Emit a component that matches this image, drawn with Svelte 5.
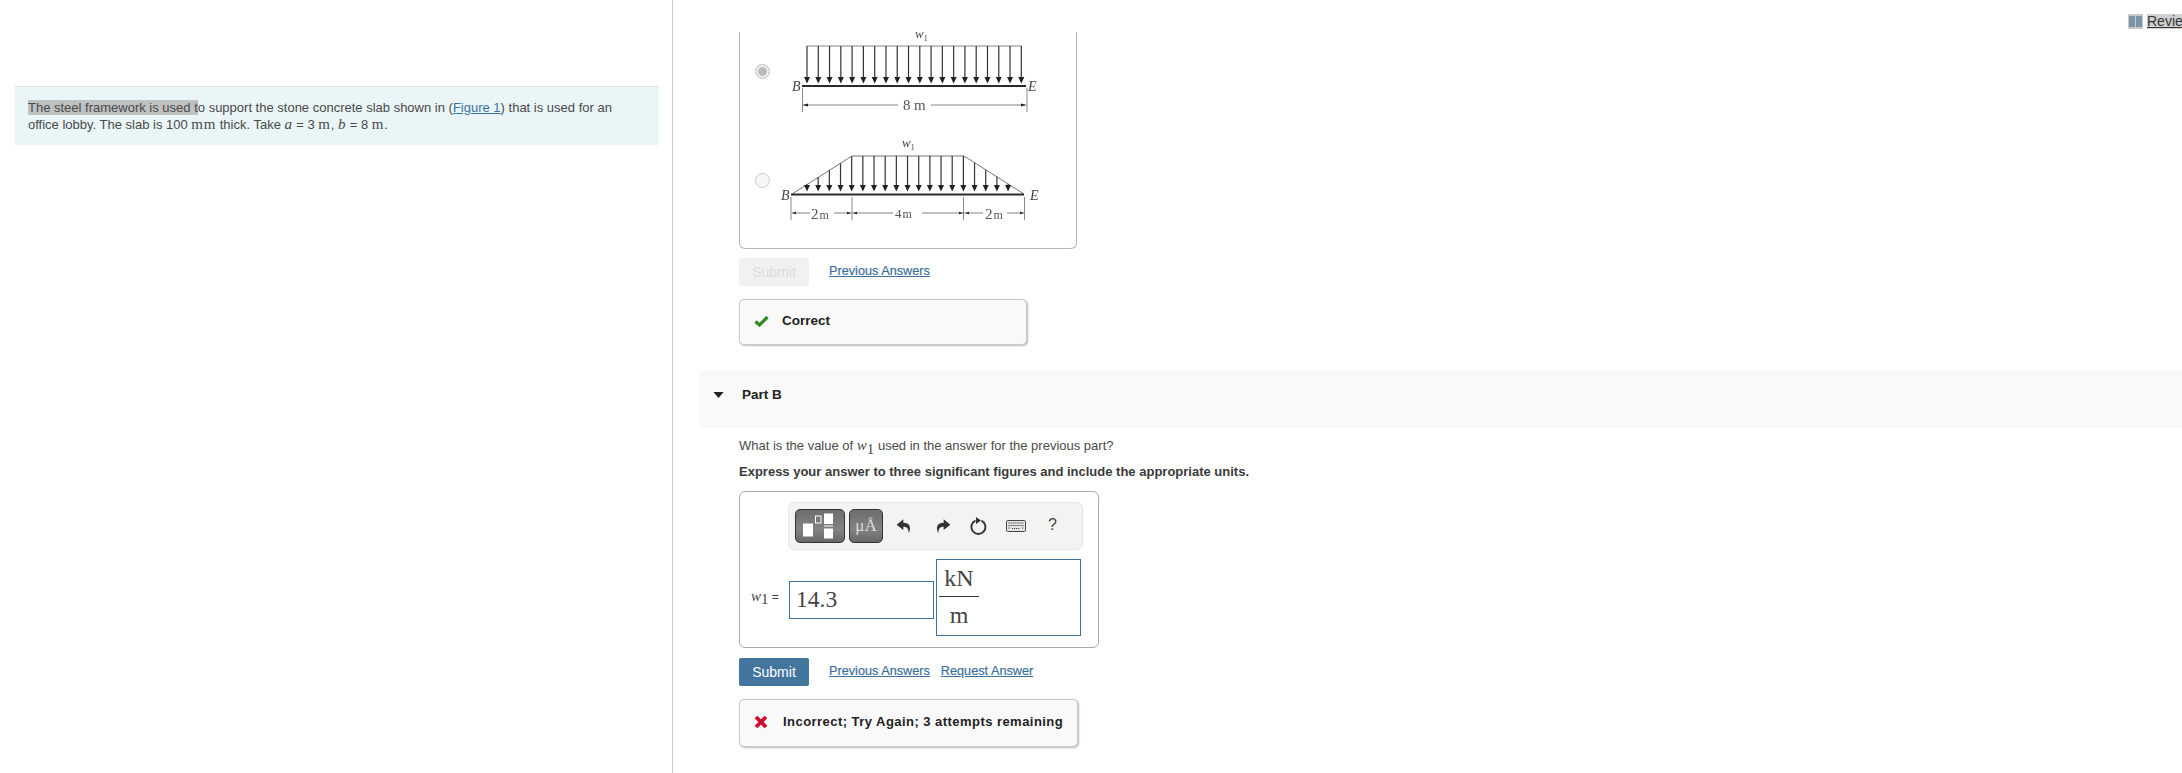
<script>
  const topArrows = Array.from({ length: 20 }, (_, i) => 807 + i * 11.28);
  const trapArrows = Array.from({ length: 19 }, (_, i) => 807 + i * 11.17);
  function trapTop(x) {
    if (x < 852) return 194 - ((x - 791.5) * 38) / 60.5;
    if (x > 964) return 194 - ((1024 - x) * 38) / 60;
    return 156;
  }
</script>

<div class="page">
  <aside class="left">
    <div class="intro">
      <p><span class="sel">The steel framework is used t</span>o support the stone concrete slab shown in (<a href="#f">Figure 1</a>) that is used for an office lobby. The slab is 100 <span class="m wide">mm</span> thick. Take <i class="m wide">a</i> = 3 <span class="m wide">m</span>, <i class="m wide">b</i> = 8 <span class="m wide">m</span>.</p>
    </div>
  </aside>

  <main class="right">
    <a class="review" href="#r">
      <svg width="15" height="15" viewBox="0 0 15 15"><rect width="15" height="15" fill="#c9c9c9" /><rect x="1" y="2" width="6" height="11" fill="#7b94a8" /><rect x="8" y="2" width="6" height="11" fill="#7b94a8" /></svg>
      <span>Review</span>
    </a>

    <section class="choices">
      <div class="choice first">
        <span class="radio on"></span>
        <svg class="fig" width="270" height="88" viewBox="780 32 270 88">
          <text x="915" y="38" class="lab it w1">w<tspan dy="2.5" font-size="8" font-style="normal">1</tspan></text>
          <line x1="807" y1="46" x2="1022" y2="46" class="thin" />
          {#each topArrows as x}
            <line x1={x} y1="46" x2={x} y2="78" class="shaft" />
            <path d="M{x - 3} 77 H{x + 3} L{x} 83.5 Z" class="head" />
          {/each}
          <line x1="802" y1="86" x2="1026" y2="86" class="beam" />
          <text x="792" y="91" class="lab it">B</text>
          <text x="1028" y="91" class="lab it">E</text>
          <line x1="802.5" y1="88" x2="802.5" y2="112" class="tick" />
          <line x1="1027" y1="88" x2="1027" y2="112" class="tick" />
          <line x1="803" y1="105" x2="898" y2="105" class="thin" />
          <line x1="931" y1="105" x2="1026" y2="105" class="thin" />
          <path d="M803 105 l5 -1.5 v3 Z M1026 105 l-5 -1.5 v3 Z" class="head" />
          <text x="903" y="110" class="lab dim">8</text>
          <text x="914" y="110" class="lab dim">m</text>
        </svg>
      </div>
      <div class="choice second">
        <span class="radio"></span>
        <svg class="fig" width="270" height="100" viewBox="780 130 270 100">
          <text x="902" y="147" class="lab it w1">w<tspan dy="2.5" font-size="8" font-style="normal">1</tspan></text>
          <path d="M792 194 L852 156 H964 L1024 194" class="outline" />
          {#each trapArrows as x}
            <line x1={x} y1={trapTop(x)} x2={x} y2="186" class="shaft" />
            <path d="M{x - 3} 185 H{x + 3} L{x} 191.5 Z" class="head" />
          {/each}
          <line x1="791" y1="194.5" x2="1024" y2="194.5" class="beam" />
          <text x="781" y="200" class="lab it">B</text>
          <text x="1030" y="200" class="lab it">E</text>
          {#each [791, 852, 963.5, 1024.5] as x}
            <line x1={x} y1="197" x2={x} y2="220" class="tick" />
          {/each}
          <line x1="792" y1="213" x2="810" y2="213" class="thin" />
          <line x1="834" y1="213" x2="852" y2="213" class="thin" />
          <line x1="853" y1="213" x2="893" y2="213" class="thin" />
          <line x1="922" y1="213" x2="963" y2="213" class="thin" />
          <line x1="964" y1="213" x2="983" y2="213" class="thin" />
          <line x1="1007" y1="213" x2="1024" y2="213" class="thin" />
          <path d="M792 213 l4 -1.3 v2.6 Z M851 213 l-4 -1.3 v2.6 Z M853 213 l4 -1.3 v2.6 Z M963 213 l-4 -1.3 v2.6 Z M965 213 l4 -1.3 v2.6 Z M1024 213 l-4 -1.3 v2.6 Z" class="head" />
          <text x="811" y="219" class="lab dim">2<tspan font-size="12" dx="1">m</tspan></text>
          <text x="895" y="218" class="lab dim small2">4<tspan dx="1" font-size="12">m</tspan></text>
          <text x="985" y="219" class="lab dim">2<tspan font-size="12" dx="1">m</tspan></text>
        </svg>
      </div>
    </section>

    <div class="actions first-actions">
      <button class="submit disabled">Submit</button>
      <a href="#p">Previous Answers</a>
    </div>

    <div class="feedback correct">
      <svg width="15" height="12" viewBox="0 0 15 12"><path d="M1.5 6.5 L5.5 10 L13.5 2" fill="none" stroke="#2f8a1f" stroke-width="3.2" /></svg>
      <strong>Correct</strong>
    </div>

    <div class="band">
      <svg width="11" height="6" viewBox="0 0 12 7"><path d="M0 0 H12 L6 7 Z" fill="#222" /></svg>
      <strong>Part B</strong>
    </div>

    <p class="question">What is the value of <i class="m w">w</i><sub class="m">1</sub> used in the answer for the previous part?</p>
    <p class="express">Express your answer to three significant figures and include the appropriate units.</p>

    <section class="answer">
      <div class="toolbar">
        <button class="tool t1" aria-label="templates">
          <svg width="40" height="27" viewBox="0 0 40 27">
            <rect x="3" y="10.5" width="10" height="13" fill="#fff" />
            <rect x="15.5" y="3" width="5.5" height="7" fill="none" stroke="#fff" />
            <rect x="24" y="0.5" width="9" height="10.5" fill="#fff" />
            <rect x="24" y="12.5" width="9" height="1" fill="#fff" />
            <rect x="24" y="15.5" width="9" height="10" fill="#fff" />
          </svg>
        </button>
        <button class="tool t2">μÅ</button>
        <svg class="ic undo" width="16" height="16" viewBox="0 0 24 24"><path d="M11 2 L1 10 L11 18 V13 C16 13 19 15 19 23 C23 14 21 7 11 7 Z" fill="#333" /></svg>
        <svg class="ic redo" width="16" height="16" viewBox="0 0 24 24"><path d="M13 2 L23 10 L13 18 V13 C8 13 5 15 5 23 C1 14 3 7 13 7 Z" fill="#333" /></svg>
        <svg class="ic refresh" width="18" height="18" viewBox="0 0 18 18"><path d="M11.5 3.7 A7 7 0 1 1 5.5 3.6" fill="none" stroke="#333" stroke-width="1.9" /><path d="M6 0 L11 3.5 L6 7 Z" fill="#333" /></svg>
        <svg class="ic kb" width="20" height="12" viewBox="0 0 20 12">
          <rect x=".5" y=".5" width="19" height="11" rx="1" fill="#e4e4e4" stroke="#444" />
          <path d="M2.5 3 H17.5 M2.5 5.5 H17.5 M2.5 8 H4 M6 8.5 H14 M16 8 H17.5" stroke="#444" stroke-width="1.2" stroke-dasharray="1.2 .8" />
        </svg>
        <span class="help">?</span>
      </div>
      <div class="entry">
        <span class="lhs"><i class="m w">w</i><sub class="m">1</sub> =</span>
        <div class="field value">14.3</div>
        <div class="field unit">
          <span class="frac"><span class="num">kN</span><span class="den">m</span></span>
        </div>
      </div>
    </section>

    <div class="actions second-actions">
      <button class="submit">Submit</button>
      <a href="#p">Previous Answers</a>
      <a href="#q">Request Answer</a>
    </div>

    <div class="feedback incorrect">
      <svg width="14" height="14" viewBox="0 0 14 14"><path d="M2 2 L12 12 M12 2 L2 12" stroke="#c8102e" stroke-width="3.8" /></svg>
      <strong>Incorrect; Try Again; 3 attempts remaining</strong>
    </div>
  </main>
</div>

<style>
  :global(body) {
    margin: 0;
    background: #fff;
  }
  * {
    box-sizing: border-box;
  }
  .page {
    display: flex;
    width: 2182px;
    height: 773px;
    overflow: hidden;
    font-family: "Liberation Sans", Arial, sans-serif;
    color: #333;
    font-size: 13px;
  }
  .left {
    flex: 0 0 673px;
    border-right: 1px solid #c9cde0;
    padding: 86px 13px 0 15px;
  }
  .intro {
    height: 59px;
    background: #e9f5f6;
    border-top: 1px solid #e0e4e4;
    padding: 13px 13px;
  }
  .intro p {
    margin: 0;
    font-size: 13px;
    line-height: 16px;
    color: #4a4a4a;
  }
  .sel {
    background: #bfc1c1;
  }
  .intro a {
    color: #3b73a1;
    text-decoration: underline;
  }
  .m {
    font-family: "Liberation Serif", serif;
    font-size: 15px;
  }
  .wide {
    letter-spacing: 0.7px;
  }
  .right {
    flex: 1;
    position: relative;
    padding-left: 66px;
    min-width: 0;
  }
  .review {
    position: absolute;
    left: 1455px;
    top: 14px;
    display: flex;
    gap: 4px;
    align-items: flex-start;
    width: 60px;
    overflow: hidden;
    color: #333;
    font-size: 14px;
    line-height: 15px;
    white-space: nowrap;
    text-decoration: underline;
  }
  .review svg,
  .review span {
    flex: none;
  }
  .review span {
    background: #d0d0d0;
  }
  .choices {
    margin-top: 32px;
    width: 338px;
    height: 217px;
    border: 1px solid #b5b5b5;
    border-top: 0;
    border-radius: 0 0 6px 6px;
  }
  .choice {
    display: flex;
    align-items: flex-start;
    gap: 10px;
    padding-left: 15px;
  }
  .choice.second {
    margin-top: 10px;
  }
  .first .radio {
    margin-top: 32px;
  }
  .second .radio {
    margin-top: 43px;
  }
  .radio {
    flex: none;
    width: 15px;
    height: 15px;
    border-radius: 50%;
    border: 1px solid #ccc;
    background: #f7f7f7;
    position: relative;
  }
  .radio.on {
    background: #bbb;
    box-shadow: inset 0 0 0 2px #f2f2f2;
  }
  .fig {
    display: block;
    filter: blur(0.25px);
  }
  .lab {
    font-family: "Liberation Serif", serif;
    font-size: 14px;
    fill: #444;
  }
  .it {
    font-style: italic;
  }
  .w1 {
    font-size: 13px;
  }
  .dim {
    font-size: 15px;
    fill: #555;
  }
  .small2 {
    font-size: 13px;
  }
  .thin {
    stroke: #666;
    stroke-width: 0.8;
  }
  .outline {
    fill: none;
    stroke: #666;
    stroke-width: 0.9;
  }
  .shaft {
    stroke: #333;
    stroke-width: 1.2;
  }
  .head {
    fill: #222;
  }
  .beam {
    stroke: #2a2a2a;
    stroke-width: 2;
  }
  .tick {
    stroke: #888;
    stroke-width: 1;
  }
  .actions {
    display: flex;
    align-items: center;
    height: 28px;
    font-size: 12px;
  }
  .first-actions {
    margin-top: 9px;
  }
  .second-actions {
    margin-top: 10px;
  }
  .actions a {
    margin-left: 20px;
    margin-top: -2px;
    color: #3b6f9e;
    font-size: 12.7px;
    text-decoration: underline;
    -webkit-text-stroke: 0.2px #3b6f9e;
  }
  .second-actions a + a {
    margin-left: 11px;
  }
  .submit {
    width: 70px;
    height: 28px;
    border: 0;
    border-radius: 2px;
    padding: 0;
    background: #42769f;
    color: #fff;
    font: 14px "Liberation Sans", Arial, sans-serif;
  }
  .submit.disabled {
    background: #f1f1f1;
    color: #dcdcdc;
  }
  .feedback {
    display: flex;
    align-items: center;
    background: #f9f9f9;
    border: 1px solid #c8c8c8;
    border-radius: 5px;
    box-shadow: 1px 1px 2px #bbb;
    padding-left: 14px;
    padding-bottom: 3px;
    color: #222;
    font-size: 13px;
  }
  .correct {
    margin-top: 13px;
    width: 288px;
    height: 46px;
    gap: 13px;
    font-size: 13.5px;
  }
  .incorrect {
    margin-top: 13px;
    width: 339px;
    height: 48px;
    gap: 15px;
    letter-spacing: 0.035em;
  }
  .band {
    margin: 26px 0 0 -40px;
    height: 57px;
    background: #f9f9f9;
    display: flex;
    align-items: center;
    gap: 18px;
    padding: 0 0 10px 14px;
    color: #222;
    font-size: 13.5px;
  }
  .question,
  .express {
    margin: 0;
    line-height: 20px;
    font-size: 13px;
    color: #4a4a4a;
  }
  .question {
    margin-top: 7px;
  }
  .express {
    margin-top: 6px;
    font-weight: bold;
    color: #3a3a3a;
  }
  .w {
    font-size: 15px;
  }
  sub {
    font-size: 9px;
    line-height: 0;
  }
  .answer {
    margin-top: 9px;
    width: 360px;
    height: 157px;
    border: 1px solid #aaa;
    border-radius: 6px;
    padding: 10px 0 0 0;
  }
  .toolbar {
    margin-left: 48px;
    width: 295px;
    height: 48px;
    background: #f3f3f3;
    border: 1px solid #e6e6e6;
    border-radius: 6px;
    display: flex;
    align-items: center;
    padding-left: 6px;
  }
  .tool {
    height: 34px;
    padding: 0;
    border: 1px solid #333;
    border-radius: 5px;
    background: linear-gradient(#6e6e6e, #828282 60%, #686868);
    display: flex;
    align-items: center;
    justify-content: center;
  }
  .t1 {
    width: 50px;
  }
  .t2 {
    width: 34px;
    margin-left: 4px;
    color: #ddd;
    font: 17px "Liberation Serif", serif;
  }
  .ic {
    flex: none;
    display: block;
  }
  .undo {
    margin-left: 13px;
  }
  .redo {
    margin-left: 23px;
  }
  .refresh {
    margin-left: 19px;
  }
  .kb {
    margin-left: 18px;
  }
  .help {
    margin-left: 22px;
    margin-top: -2px;
    font-size: 16px;
    color: #444;
  }
  .entry {
    display: flex;
    align-items: flex-start;
    margin-top: 9px;
    padding-left: 11px;
  }
  .lhs {
    width: 38px;
    margin-top: 27px;
    font-size: 12px;
    line-height: 20px;
    color: #444;
    white-space: nowrap;
  }
  .field {
    border: 1.5px solid #3f729f;
    font-family: "Liberation Serif", serif;
    color: #444;
  }
  .value {
    width: 145px;
    height: 38px;
    margin-top: 22px;
    padding-left: 6px;
    font-size: 23.5px;
    line-height: 34px;
  }
  .unit {
    width: 145px;
    height: 77px;
    margin-left: 2px;
    padding-left: 2px;
    font-size: 24px;
  }
  .frac {
    display: inline-flex;
    flex-direction: column;
    width: 40px;
    text-align: center;
  }
  .num {
    height: 37px;
    line-height: 37px;
    border-bottom: 1.5px solid #333;
  }
  .den {
    line-height: 36px;
  }
</style>
